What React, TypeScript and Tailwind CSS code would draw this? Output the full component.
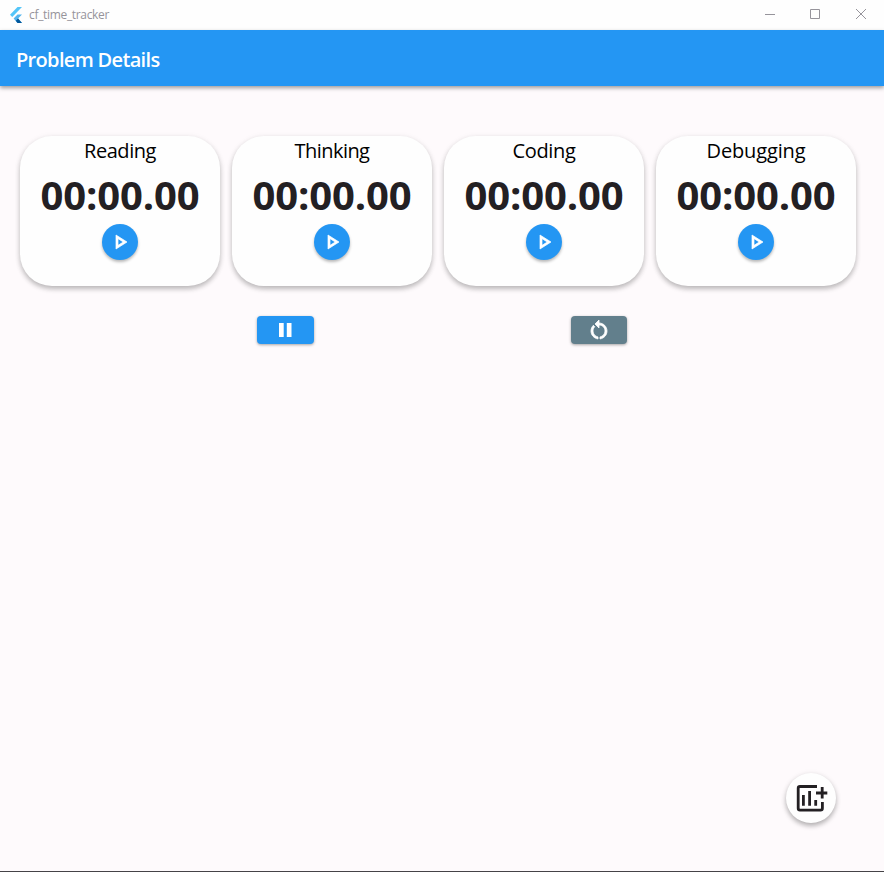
import React from "react";

const play = "M10 8.64 15.27 12 10 15.36V8.64M8 5v14l11-7L8 5z";
const restart =
  "M12 5V2L8 6l4 4V7c3.31 0 6 2.69 6 6 0 2.97-2.17 5.43-5 5.91v2.02c3.95-.49 7-3.85 7-7.93 0-4.42-3.58-8-8-8zm-6 8c0-1.65.67-3.15 1.76-4.24L6.34 7.34C4.9 8.79 4 10.79 4 13c0 4.08 3.05 7.44 7 7.93v-2.02c-2.83-.48-5-2.94-5-5.91z";

function Glyph({ d, stroke = 0 }: { d: string; stroke?: number }) {
  return (
    <svg viewBox="0 0 24 24" className="size-6" fill="currentColor" stroke="currentColor" strokeWidth={stroke}>
      <path d={d} />
    </svg>
  );
}

function TitleBar() {
  return (
    <div className="flex h-[30px] items-center bg-[#fefefe] text-[#96949b]">
      <svg viewBox="0 0 12 16" className="mb-px ml-[10px] h-4 w-3">
        <path d="M7.5 0H12L2.3 10 0 7.8z" fill="#54c5f8" />
        <path d="M7.5 7.4H12L8.1 11.4 12 16H7.5L3.6 11.6z" fill="#54b5ee" />
        <path d="M5.8 13.7 8.1 11.4 12 16H7.5z" fill="#01579b" />
      </svg>
      <span className="ml-[7px] text-xs leading-none tracking-[-0.33px]">cf_time_tracker</span>
      <div className="mr-[18px] mb-[2px] ml-auto flex items-center">
        <svg viewBox="0 0 10 10" className="mr-[35px] size-[10px]" stroke="currentColor" fill="none">
          <path d="M0 5.5h10" />
        </svg>
        <svg viewBox="0 0 10 10" className="mr-9 size-[10px]" stroke="currentColor" fill="none">
          <path d="M.5.5h9v9h-9z" />
        </svg>
        <svg viewBox="0 0 10 10" className="size-[10px]" stroke="currentColor" fill="none">
          <path d="m0 0 10 10M10 0 0 10" />
        </svg>
      </div>
    </div>
  );
}

function TimerCard({ label, spacing }: { label: string; spacing: string }) {
  return (
    <section className="flex h-[150px] w-[200px] flex-col items-center rounded-[32px] bg-[#fefefe] shadow-[0_3px_5px_rgba(0,0,0,0.24),0_1px_7px_rgba(0,0,0,0.06)]">
      <h2 className={`mt-px h-[27px] text-xl leading-[27px] text-black ${spacing}`}>{label}</h2>
      <div className="mt-1 h-[54px] text-[40px] leading-[54px] font-bold tracking-[-0.1px] text-[#232023]">00:00.00</div>
      <button className="mt-[2px] flex size-9 items-center justify-center rounded-full bg-[#2496f3] text-white shadow-[0_2px_3px_rgba(0,0,0,0.28)]">
        <Glyph d={play} stroke={0.7} />
      </button>
    </section>
  );
}

export default function App() {
  return (
    <div className="flex h-[872px] w-[884px] flex-col border-b border-[#454347] bg-[#fefafc] font-['Open_Sans',sans-serif]">
      <TitleBar />
      <header className="flex h-14 items-center bg-[#2496f3] px-4 pt-[3px] shadow-[0_2px_4px_rgba(0,0,0,0.38)]">
        <h1 className="text-xl font-semibold tracking-[-0.67px] text-white">Problem Details</h1>
      </header>
      <main className="flex flex-1 flex-col">
        <div className="mt-[50px] flex gap-3 pl-5">
          <TimerCard label="Reading" spacing="tracking-[-0.45px]" />
          <TimerCard label="Thinking" spacing="tracking-[-0.55px]" />
          <TimerCard label="Coding" spacing="tracking-[-0.3px]" />
          <TimerCard label="Debugging" spacing="tracking-[-0.15px]" />
        </div>
        <div className="mt-[30px] flex gap-[257px] pl-[257px] text-white">
          <button className="flex h-7 w-[56.5px] items-center justify-center rounded-[4px] bg-[#2496f3] shadow-[0_1px_3px_rgba(0,0,0,0.35)]">
            <Glyph d="M6 19h4.7V5H6v14zm7.8-14v14h4.7V5h-4.7z" />
          </button>
          <button className="flex h-7 w-[56.5px] items-center justify-center rounded-[4px] bg-[#627f8c] shadow-[0_1px_3px_rgba(0,0,0,0.35)]">
            <Glyph d={restart} stroke={0.8} />
          </button>
        </div>
        <button className="mt-auto mr-12 mb-12 flex size-[50px] items-center justify-center self-end rounded-full bg-[#fefefe] text-[#232023] shadow-[0_3px_5px_rgba(0,0,0,0.26),0_1px_6px_rgba(0,0,0,0.08)]">
          <svg viewBox="0 0 50 50" className="size-[50px]" fill="none" stroke="currentColor" strokeWidth="2.8">
            <path d="M31 13.5H14a1.8 1.8 0 0 0-1.8 1.8v20a1.8 1.8 0 0 0 1.8 1.8h20.6a1.8 1.8 0 0 0 1.8-1.8V29" />
            <path d="M17.4 22v10.7M23.6 18v14.7M29.7 27v5.7M30 20h11.3M36.2 14v11.5" />
          </svg>
        </button>
      </main>
    </div>
  );
}
